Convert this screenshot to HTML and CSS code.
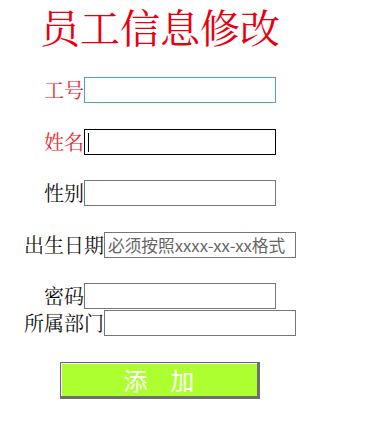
FILE: index.html
```html
<!DOCTYPE html>
<html lang="zh">
<head>
<meta charset="utf-8">
<title>员工信息修改</title>
<link rel="stylesheet" href="styles.css">
</head>
<body>
<div class="page">
  <div class="title">员工信息修改</div>
  <form class="form">
    <div class="row row-first">
      <span class="label label-red">工号</span><input class="field field-hover" type="text">
    </div>
    <div class="row">
      <span class="label label-red">姓名</span><span class="field-wrap"><input class="field field-focus" type="text"><span class="caret"></span></span>
    </div>
    <div class="row">
      <span class="label">性别</span><input class="field" type="text">
    </div>
    <div class="row">
      <span class="label">出生日期</span><input class="field" type="text" placeholder="必须按照xxxx-xx-xx格式">
    </div>
    <div class="row">
      <span class="label">密码</span><input class="field" type="password">
    </div>
    <div class="row row-tight">
      <span class="label">所属部门</span><input class="field" type="text">
    </div>
    <div class="row row-button">
      <button class="submit" type="button">添&nbsp;&nbsp;加</button>
    </div>
  </form>
</div>
</body>
</html>
```

FILE: styles.css
```css
html, body {
  margin: 0;
  padding: 0;
  background: #ffffff;
}

body {
  padding: 0 10px;
  font-family: "Noto Serif CJK SC", "Noto Sans CJK SC", "Liberation Serif", serif;
}

.page {
  width: 300px;
  padding-top: 0;
}

.title {
  line-height: 52px;
  font-size: 40px;
  color: #e8000e;
  text-align: center;
}

.form {
  margin: 25px 0 0 0;
}

.row {
  display: flex;
  justify-content: center;
  align-items: center;
  height: 26px;
  margin-top: 25.6px;
}

.row-first {
  margin-top: 0;
}

.row-tight {
  margin-top: 1px;
}

.row-button {
  height: 37px;
  margin-top: 26px;
}

.label {
  font-size: 20px;
  line-height: 26px;
  color: #111111;
  white-space: nowrap;
}

.label-red {
  color: #e8262e;
}

.field {
  box-sizing: border-box;
  width: 192px;
  height: 26px;
  margin: 0;
  padding: 1px 3px;
  border: 1px solid #767676;
  border-radius: 0;
  background: #ffffff;
  font-family: "Noto Sans CJK SC", "Liberation Sans", sans-serif;
  font-size: 16.7px;
  color: #222222;
  outline: none;
}

.field::placeholder {
  color: #666666;
}

.field-hover {
  border-color: #4ea2d6;
}

.field-wrap {
  position: relative;
  display: block;
  width: 192px;
  height: 26px;
}

.field-focus {
  display: block;
  border-color: #000000;
}

.caret {
  position: absolute;
  left: 4px;
  top: 4px;
  width: 1px;
  height: 19px;
  background: #000000;
}

.submit {
  box-sizing: border-box;
  width: 200px;
  height: 37px;
  margin: 0;
  padding: 0;
  background: #adff2f;
  border-style: solid;
  border-width: 1px 3px 3px 1px;
  border-color: #6a6a6a #6f6f6f #6f6f6f #6a6a6a;
  box-shadow: inset 1px 1px 0 #ffffff;
  border-radius: 0;
  font-family: "Noto Sans CJK SC", "Liberation Sans", sans-serif;
  font-size: 24px;
  line-height: 30px;
  color: #ffffff;
  word-spacing: 6px;
}
```
